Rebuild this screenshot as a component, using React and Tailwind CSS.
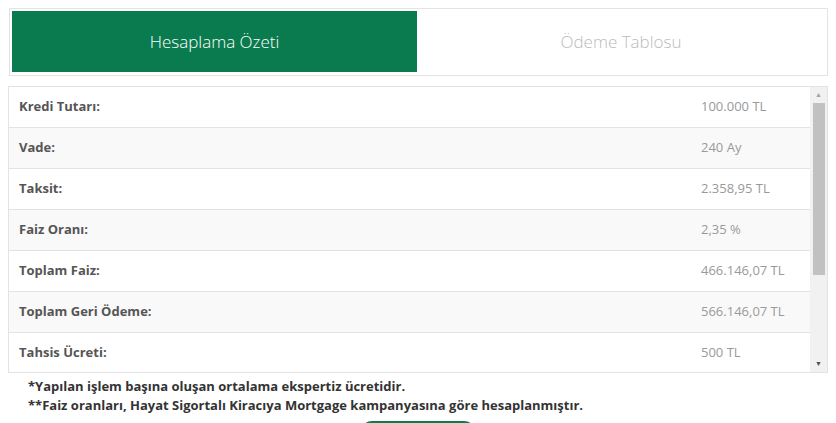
export default function App() {
  const rows = [
    ["Kredi Tutarı:", "100.000 TL"],
    ["Vade:", "240 Ay"],
    ["Taksit:", "2.358,95 TL"],
    ["Faiz Oranı:", "2,35 %"],
    ["Toplam Faiz:", "466.146,07 TL"],
    ["Toplam Geri Ödeme:", "566.146,07 TL"],
    ["Tahsis Ücreti:", "500 TL"],
  ];
  return (
    <div className="w-[836px] h-[423px] bg-white overflow-hidden" style={{ fontFamily: '"Open Sans", sans-serif' }}>
      <div className="ml-[9px] mt-[8px] w-[819px] h-[68px] border border-[#e3e3e3] flex p-[2px] pb-[3px]">
        <div className="w-[405px] bg-[#0a7b4e] text-white text-[17px] font-light flex items-center justify-center">Hesaplama Özeti</div>
        <div className="flex-1 text-[#bbb] text-[17px] font-light flex items-center justify-center">Ödeme Tablosu</div>
      </div>
      <div className="ml-[8px] mt-[10px] w-[820px] h-[287px] border border-[#e3e3e3] flex overflow-hidden">
        <div className="flex-1">
          {rows.map(([k, v], i) => (
            <div key={k} className={`h-[41px] flex items-center border-b border-[#e3e3e3] ${i % 2 ? "bg-[#f9f9f9]" : "bg-white"}`}>
              <div className="pl-[10px] w-[692px] text-[13px] font-bold text-[#555]">{k}</div>
              <div className="text-[13px] text-[#999]">{v}</div>
            </div>
          ))}
        </div>
        <div className="w-[17px] bg-[#f1f1f1] flex flex-col items-center">
          <div className="h-[16px] flex items-center text-[7px] text-[#a3a3a3]">▲</div>
          <div className="w-[12px] h-[172px] bg-[#c1c1c1]"></div>
          <div className="flex-1"></div>
          <div className="h-[16px] flex items-center text-[7px] text-[#505050]">▼</div>
        </div>
      </div>
      <div className="pl-[28px] pt-[4px] text-[13px] font-bold text-[#333] leading-[19px]">
        <div>*Yapılan işlem başına oluşan ortalama ekspertiz ücretidir.</div>
        <div>**Faiz oranları, Hayat Sigortalı Kiracıya Mortgage kampanyasına göre hesaplanmıştır.</div>
      </div>
      <div className="ml-[360px] mt-[6px] w-[116px] h-[20px] rounded-t-[12px] bg-[#0a7b4e]"></div>
    </div>
  );
}
